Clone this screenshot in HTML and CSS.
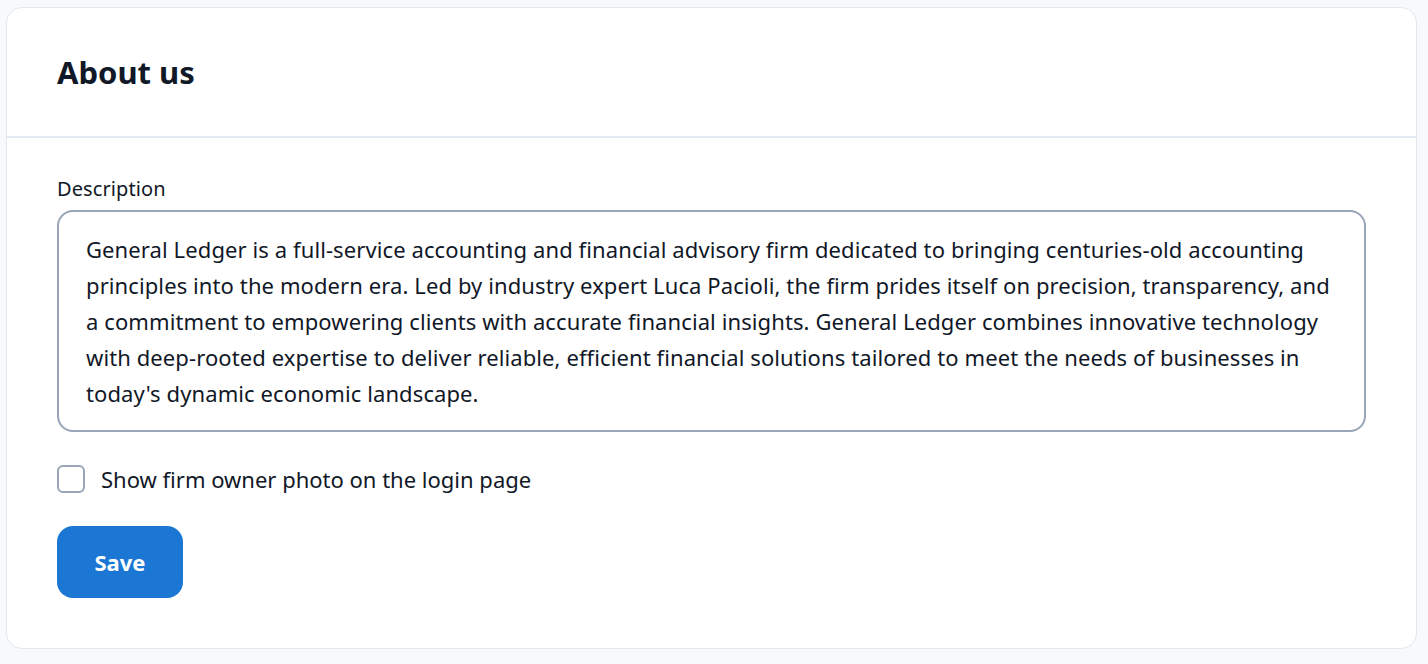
FILE: index.html
```html
<!DOCTYPE html>
<html lang="en">
<head>
  <meta charset="UTF-8">
  <meta name="viewport" content="width=device-width, initial-scale=1.0">
  <title>About us</title>
  <link rel="stylesheet" href="styles.css">
</head>
<body>
  <div class="card">
    <div class="card-header">
      <h2 class="card-title">About us</h2>
    </div>
    <div class="card-body">
      <label class="field-label" for="description">Description</label>
      <textarea id="description" class="field-textarea">General Ledger is a full-service accounting and financial advisory firm dedicated to bringing centuries-old accounting principles into the modern era. Led by industry expert Luca Pacioli, the firm prides itself on precision, transparency, and a commitment to empowering clients with accurate financial insights. General Ledger combines innovative technology with deep-rooted expertise to deliver reliable, efficient financial solutions tailored to meet the needs of businesses in today's dynamic economic landscape.</textarea>
      <label class="check-row">
        <input type="checkbox" class="check-box">
        <span>Show firm owner photo on the login page</span>
      </label>
      <button class="btn-save">Save</button>
    </div>
  </div>
</body>
</html>
```

FILE: styles.css
```css
body {
  margin: 0;
  background-color: #f8f9fb;
  font-family: "Noto Sans", "Open Sans", sans-serif;
  color: #111827;
}

.card {
  margin: 7px 11px 15px 6px;
  background-color: #fff;
  border: 1px solid #e2e8f0;
  border-radius: 16px;
}

.card-header {
  padding: 44px 50px;
  border-bottom: 2px solid #e5e9f2;
}

.card-title {
  margin: 0;
  font-size: 31px;
  line-height: 40px;
  font-weight: 700;
  color: #111827;
}

.card-body {
  display: flex;
  flex-direction: column;
  align-items: flex-start;
  padding: 37px 50px 50px;
}

.field-label {
  font-size: 20px;
  letter-spacing: 0.1px;
  line-height: 28px;
  margin-bottom: 7px;
}

.field-textarea {
  box-sizing: border-box;
  width: 100%;
  height: 222px;
  padding: 19px 27px 21px;
  border: 2px solid #98a4b8;
  border-radius: 16px;
  font-family: inherit;
  font-size: 22px;
  letter-spacing: 0.1px;
  line-height: 36px;
  color: #111827;
  resize: none;
  overflow: hidden;
  outline: none;
}

.check-row {
  display: flex;
  align-items: center;
  gap: 16px;
  margin-top: 33px;
  font-size: 22px;
  line-height: 28px;
  cursor: pointer;
}

.check-box {
  appearance: none;
  -webkit-appearance: none;
  box-sizing: border-box;
  width: 28px;
  height: 28px;
  margin: 0;
  border: 2px solid #98a4b8;
  border-radius: 6px;
  background: #fff;
  cursor: pointer;
}

.btn-save {
  margin-top: 33px;
  width: 126px;
  height: 72px;
  border: 0;
  border-radius: 16px;
  background-color: #1b76d4;
  color: #fff;
  font-family: inherit;
  font-size: 22px;
  font-weight: 700;
  cursor: pointer;
}
```
